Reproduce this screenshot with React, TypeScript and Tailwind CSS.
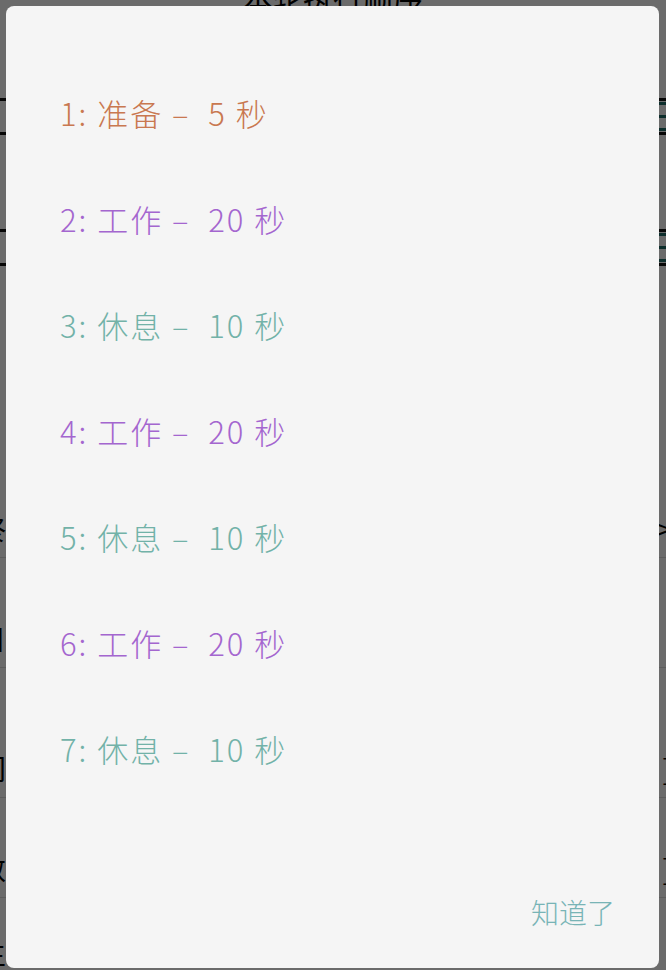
const steps = [
  { label: '1: 准备 –  5 秒', color: 'text-[#c97850]' },
  { label: '2: 工作 –  20 秒', color: 'text-[#a466cf]' },
  { label: '3: 休息 –  10 秒', color: 'text-[#72b2a8]' },
  { label: '4: 工作 –  20 秒', color: 'text-[#a466cf]' },
  { label: '5: 休息 –  10 秒', color: 'text-[#72b2a8]' },
  { label: '6: 工作 –  20 秒', color: 'text-[#a466cf]' },
  { label: '7: 休息 –  10 秒', color: 'text-[#72b2a8]' },
]

function DragRow() {
  return (
    <div className="flex h-[37px] items-center justify-between border-y-[3px] border-[#111]">
      <span />
      <div className="flex flex-col gap-[10px]">
        <div className="h-[3px] w-6 bg-[#1f6f6a]" />
        <div className="h-[3px] w-6 bg-[#1f6f6a]" />
        <div className="h-[3px] w-6 bg-[#1f6f6a]" />
      </div>
    </div>
  )
}

function SettingRow({ left, right, h }: { left: string; right: string; h: string }) {
  return (
    <div className={`flex items-center justify-between border-b border-[#ddd] ${h}`}>
      <span className="-ml-[22px] text-[28px] text-black">{left}</span>
      <span className="-mr-[6px] text-[28px] text-black">{right}</span>
    </div>
  )
}

export default function App() {
  return (
    <div
      className="relative h-[970px] w-[666px] overflow-hidden bg-white"
      style={{ fontFamily: '"Noto Sans CJK SC", "Noto Sans", sans-serif' }}
    >
      {/* page underneath the dialog */}
      <div className="flex flex-col">
        <div className="-mt-[18px] text-center text-[30px] leading-[30px] text-black">本轮执行顺序</div>
        <div className="h-[86px]" />
        <DragRow />
        <div className="h-[94px]" />
        <DragRow />
        <div className="h-[232px]" />
        <SettingRow left="终" right=">" h="h-[60px]" />
        <div className="h-[50px]" />
        <SettingRow left="目" right="" h="h-[60px]" />
        <div className="h-[70px]" />
        <SettingRow left="间" right="]" h="h-[60px]" />
        <div className="h-[40px]" />
        <SettingRow left="数" right="]" h="h-[60px]" />
        <div className="h-[25px]" />
        <SettingRow left="生" right="" h="h-[60px]" />
      </div>

      {/* dim layer */}
      <div className="absolute inset-0 bg-black/[0.58]" />

      {/* dialog */}
      <div className="absolute left-[6px] top-[6px] flex h-[962px] w-[653px] flex-col rounded-[8px] bg-[#f5f5f5]">
        <ul className="flex flex-col pl-[54px] pt-[54px]">
          {steps.map((s) => (
            <li
              key={s.label}
              className={`h-[106px] whitespace-pre text-[31px] font-light leading-[106px] tracking-[2px] ${s.color}`}
            >
              {s.label}
            </li>
          ))}
        </ul>
        <div className="mt-auto flex justify-end pb-[38px] pr-[44px]">
          <button className="text-[28px] font-light leading-[36px] text-[#78b4b6]">知道了</button>
        </div>
      </div>
    </div>
  )
}
